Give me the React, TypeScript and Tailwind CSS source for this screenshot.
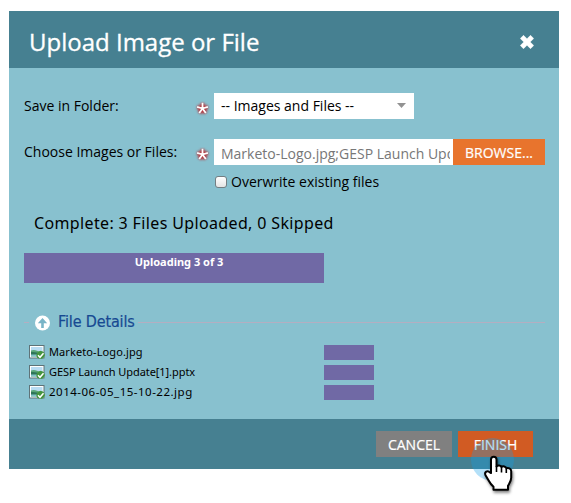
const files = [
  { name: 'Marketo-Logo.jpg', spacing: 'tracking-[0.1px]' },
  { name: 'GESP Launch Update[1].pptx', spacing: 'tracking-[-0.07px]' },
  { name: '2014-06-05_15-10-22.jpg', spacing: 'text-[11.5px] tracking-[0.5px]' },
];

function Required() {
  return (
    <svg className="mt-[3px] h-4 w-4 shrink-0 overflow-visible" viewBox="0 0 16 16" fill="none">
      <defs>
        <filter id="redGlow" x="-50%" y="-50%" width="200%" height="200%">
          <feGaussianBlur stdDeviation="1.1" />
        </filter>
      </defs>
      <path d="M7.500 8.500V3M7.500 8.500l5.300-1.500M7.500 8.500 2.200 7M7.500 8.500l3.200 4.500M7.500 8.500l-3.200 4.500" stroke="#b5343c" strokeWidth="4" filter="url(#redGlow)" />
      <path d="M7.500 8.500V2.700M7.500 8.500l5.400-1.600M7.500 8.500 2.100 6.900M7.500 8.500l3.300 4.600M7.500 8.500l-3.300 4.600" stroke="white" strokeWidth="1.800" />
    </svg>
  );
}

function FileIcon() {
  return (
    <svg className="h-4 w-4 shrink-0" viewBox="0 0 16 16">
      <rect x=".5" y="1.500" width="14.500" height="12.500" fill="white" stroke="#5f7378" />
      <path d="M2 3h11.500v5H2z" fill="#b8dcf3" />
      <path d="M2 6.500q3-1 6 .2t5.500 0V12.500H2z" fill="#5aa577" />
      <path d="M2 8q5-.5 9 1.500v1.500H2z" fill="#2d7558" />
      <path d="M2 10.500h6v2H2z" fill="#84c3cb" />
      <path d="M11.500 6.800 13 7.500l1.700.4.600 1.600.7 1.600-.9 1.700-1.200 1.500-1.900.8-2.100-.5-1.800-.9-.7-1.900.3-1.900 1-1.600z" fill="#45943e" />
      <path d="m9 11.300 2 2 3.500-4" fill="none" stroke="white" strokeWidth="1.500" />
    </svg>
  );
}

function Pointer() {
  return (
    <div className="pointer-events-none absolute left-[461px] top-[427px] h-[65px] w-[60px]">
      <svg className="h-full w-full overflow-visible" viewBox="470 438 60 65">
        <defs>
          <filter id="handShadow" x="-30%" y="-30%" width="170%" height="170%">
            <feDropShadow dx="1" dy="2" stdDeviation="1.500" floodOpacity=".5" />
          </filter>
        </defs>
        <circle cx="492.500" cy="459.500" r="21.500" fill="#149fe8" fillOpacity=".32" />
        <path
          d="M491 473V459.500c0-3.800 5.500-3.800 5.500 0v7c1-1.800 4.500-1.300 5 .7 1.200-1.500 4.500-.8 4.800 1.200 1.700-1 4.900.2 4.900 2.800v6.600c0 3.500-2 5.700-3.200 8v4h-14.500v-3c-1.800-1.600-3.500-3.700-4.700-6l-3.300-5.600c-1.500-3 2-5.400 4.300-2.800z"
          fill="white" stroke="black" strokeWidth="2" strokeLinejoin="round" filter="url(#handShadow)"
        />
        <path d="M496.500 466v6m5-4.500v5m4.800-3.500v4" stroke="black" strokeWidth="1.600" />
      </svg>
    </div>
  );
}

export default function App() {
  return (
    <main className="h-[503px] w-[571px] overflow-hidden bg-white pl-[9px] pt-[11px] font-['Open_Sans',sans-serif] text-black">
      <section className="relative flex h-[458px] w-[550px] flex-col bg-[#88c1cf]">
        <header className="flex h-[57px] shrink-0 items-center justify-between bg-[#468091] pl-5 pr-[25px] text-white">
          <h1 className="whitespace-nowrap pt-1 text-[24px] leading-8 [-webkit-text-stroke:0.3px_white]">Upload Image or File</h1>
          <svg className="mt-[5px] h-[14px] w-[14px]" viewBox="0 0 14 14">
            <path d="M3.500.3 7 3.800 10.500.3l3.200 3.200L10.200 7l3.500 3.500-3.200 3.200L7 10.200l-3.500 3.500L.3 10.500 3.800 7 .3 3.500z" fill="white" stroke="white" strokeWidth=".5" strokeLinejoin="round" />
          </svg>
        </header>

        <div className="flex h-[351px] shrink-0 flex-col pl-[15px] pt-[25px]">
          <div className="flex h-[26px] items-center text-[14px]">
            <label className="w-[171px] whitespace-nowrap pb-0.5">Save in Folder:</label>
            <Required />
            <div className="ml-[3px] flex h-[26px] w-[200px] items-center justify-between bg-white pl-[7px] pr-2">
              <span className="pb-0.5">-- Images and Files --</span>
              <svg className="mb-0.5 h-[5px] w-[9px]" viewBox="0 0 9 5"><path d="M0 0h9L4.500 5z" fill="#929292" /></svg>
            </div>
          </div>
          <div className="mt-5 flex h-[26px] items-center text-[14px]">
            <label className="w-[171px] whitespace-nowrap pb-0.5">Choose Images or Files:</label>
            <Required />
            <div className="ml-[3px] h-[26px] w-[239px] bg-white pl-[7px] pr-[3px]">
              <input className="block h-[26px] w-full pt-0.5 text-[#777] outline-none" readOnly value="Marketo-Logo.jpg;GESP Launch Update[1].pptx" />
            </div>
            <button className="h-[26px] w-[92px] bg-[#e8742d] text-white [-webkit-text-stroke:0.2px_white]">BROWSE...</button>
          </div>
          <label className="ml-[191px] mt-[6px] flex h-5 items-center gap-1 whitespace-nowrap text-[14px]">
            <span className="mt-0.5 h-3 w-3 rounded-[3px] border border-[#747e82] bg-linear-to-b from-white to-[#e4e4e4]" />
            Overwrite existing files
          </label>
          <div className="ml-2.5 mt-5 h-6 whitespace-nowrap font-['Noto_Sans',sans-serif] text-[16px] leading-6 tracking-[0.36px]">Complete: 3 Files Uploaded, 0 Skipped</div>
          <div className="mt-[18px] h-[30px] w-[300px] bg-[#7069a5] pl-[10px] pt-px text-center font-['Noto_Sans',sans-serif] text-[11px] font-bold leading-4 text-white">Uploading 3 of 3</div>

          <div className="mt-[27px] flex h-6 w-[521px] items-center">
            <span className="mt-px h-px w-[5px] bg-[#b4aec1]" />
            <svg className="ml-[6px] mt-px h-4 w-[15px]" viewBox="0 0 15 16">
              <circle cx="7.500" cy="8" r="7.500" fill="white" />
              <path d="M6.200 13V8.200H2.800L7.500 3l4.700 5.200H8.800V13z" fill="#79b4c7" />
            </svg>
            <h2 className="ml-2 whitespace-nowrap font-['DejaVu_Sans_Condensed','DejaVu_Sans',sans-serif] text-[16px] tracking-[-0.15px] text-[#174992] [-webkit-text-stroke:0.2px_#174992]">File Details</h2>
            <span className="ml-[3px] mt-px h-px grow bg-[#b4aec1]" />
          </div>
          <div className="mt-[8px] pl-[5px] font-['Noto_Sans',sans-serif] text-[11px]">
            {files.map(({ name, spacing }) => (
              <div className="flex h-5 items-center" key={name}>
                <FileIcon />
                <span className={`ml-1 w-[275px] whitespace-nowrap ${spacing}`}>{name}</span>
                <span className="h-[15px] w-[50px] bg-[#7069a5]" />
              </div>
            ))}
          </div>
        </div>

        <footer className="flex h-[50px] shrink-0 gap-1.5 bg-[#468091] pl-[367px] pt-3 text-[14px] text-white [-webkit-text-stroke:0.2px_white]">
          <button className="h-[26px] w-[76px] bg-[#808080]">CANCEL</button>
          <button className="h-[26px] w-[75px] bg-[#d15b23]">FINISH</button>
        </footer>
        <Pointer />
      </section>
    </main>
  );
}
